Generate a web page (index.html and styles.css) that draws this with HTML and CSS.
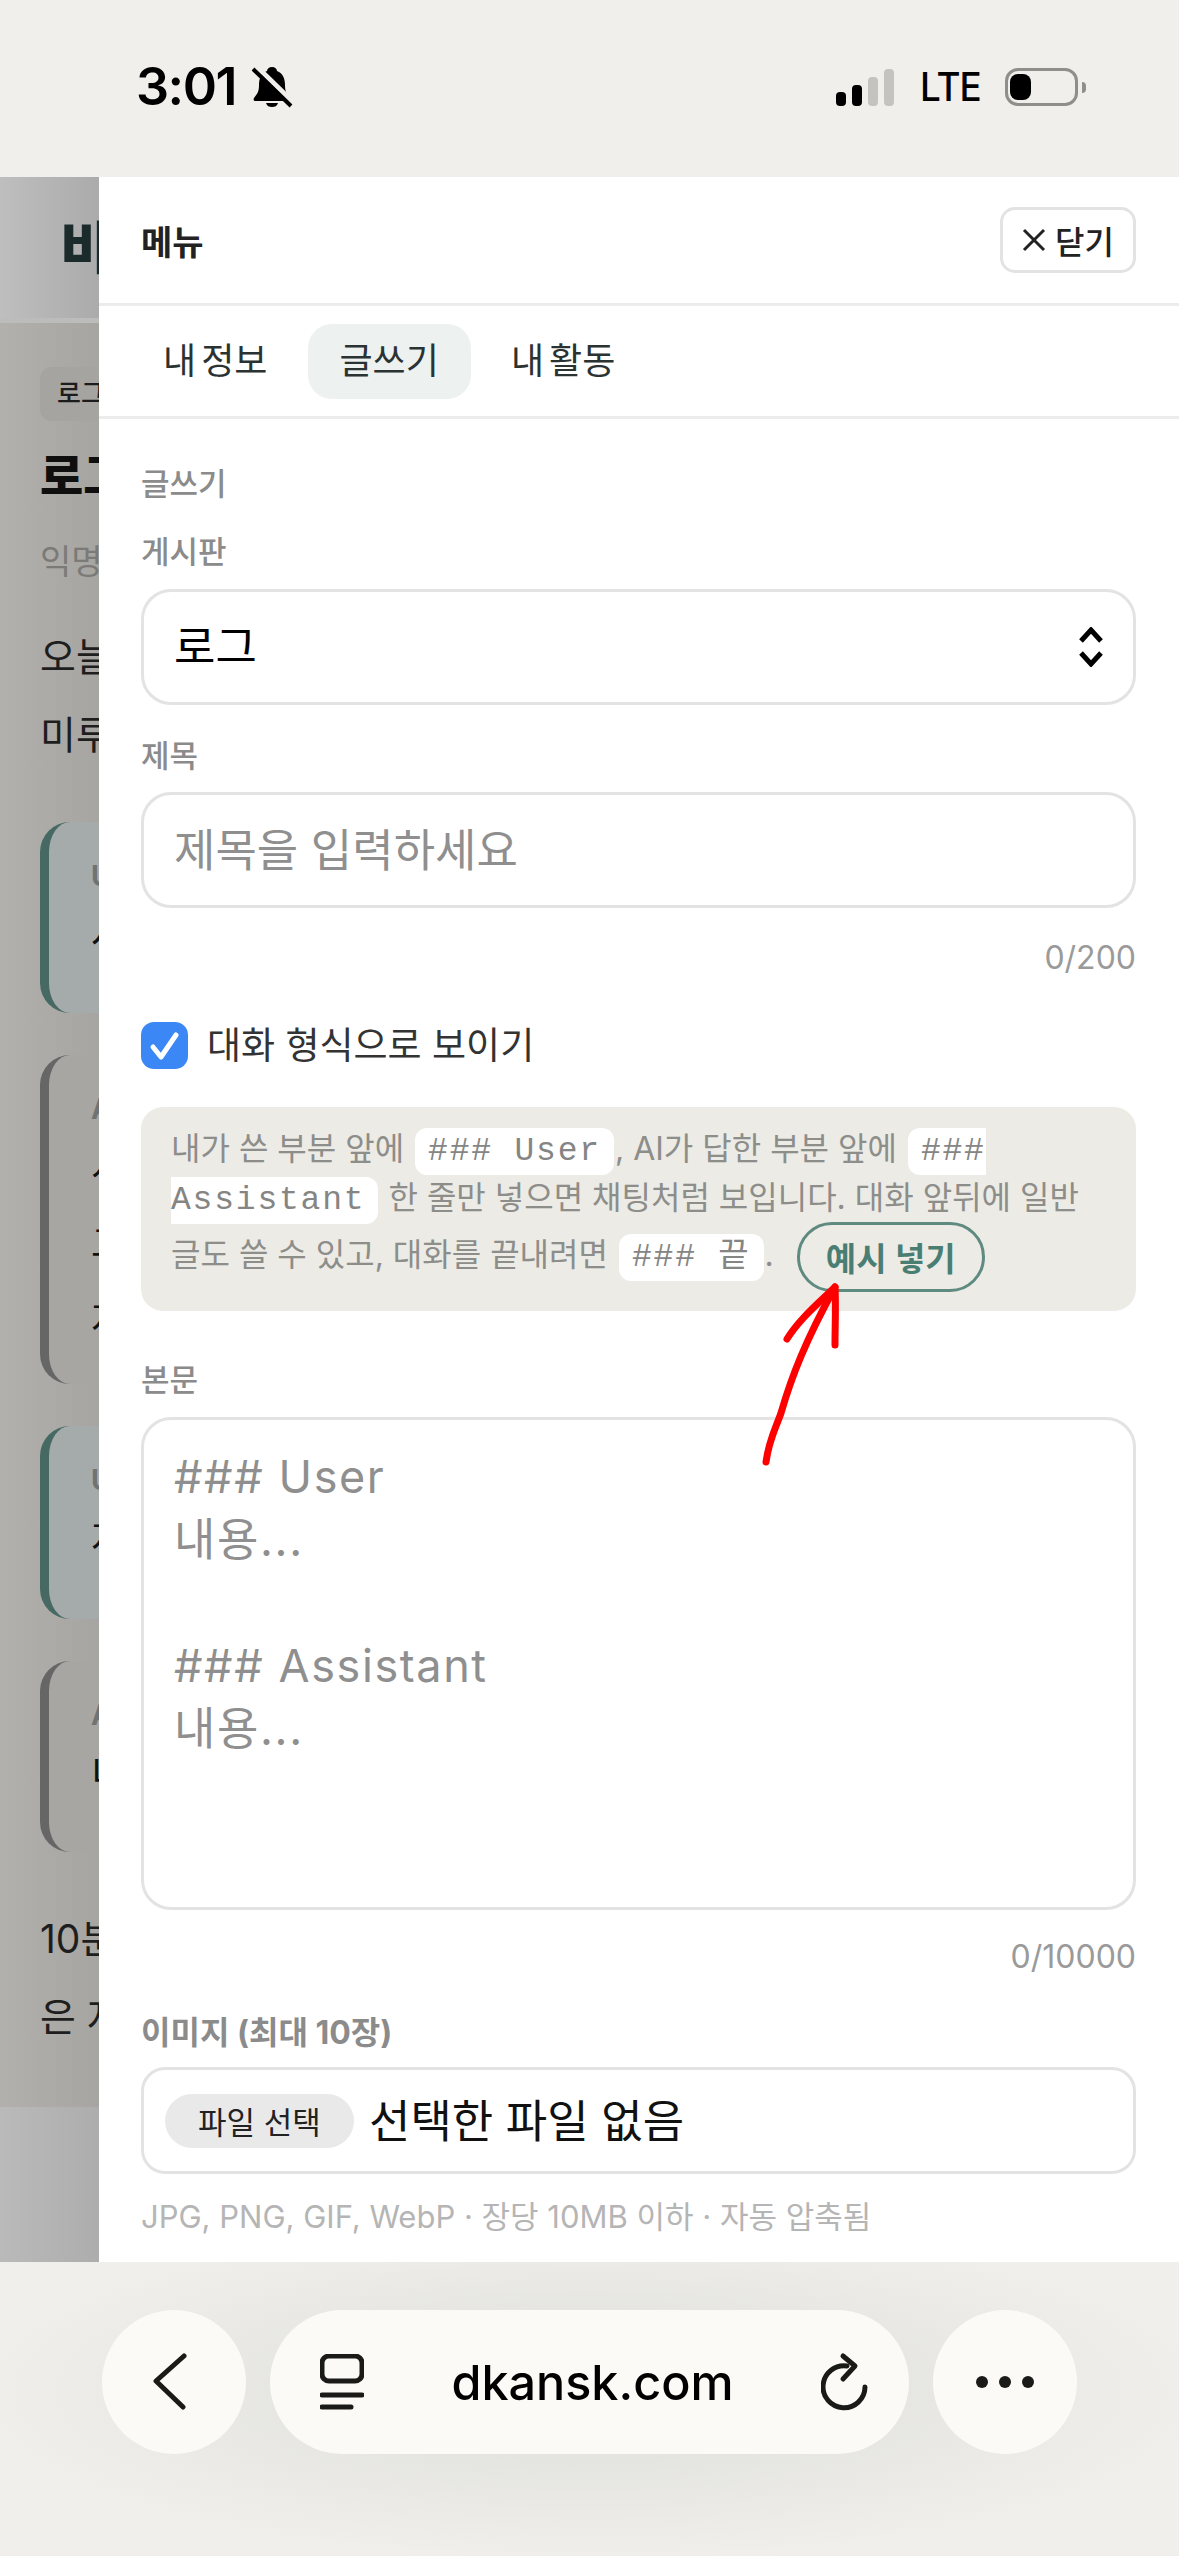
FILE: index.html
```html
<!DOCTYPE html>
<html lang="ko">
<head>
    <meta charset="UTF-8" name="viewport" content="width=device-width, initial-scale=1.0">
    <title>dkansk.com</title>
    <link rel="stylesheet" href="styles.css">
</head>
<body>
<div class="phone">

    <!-- Status bar -->
    <div class="status">
        <span class="time">3:01</span>
        <svg class="bell" width="42" height="44" viewBox="0 0 42 44">
            <path d="M21 2c-3 0-5 2-5 4C10 8 8 14 8 20c0 7-2 9-5 13-1 2 0 3 2 3h32c2 0 3-1 2-3-3-4-5-6-5-13 0-6-2-12-8-14 0-2-2-4-5-4z"/>
            <path d="M15 38h12c-1 3-3 4-6 4s-5-1-6-4z"/>
            <path class="bell-gap" d="M5 1l38 37"/>
            <path class="bell-slash" d="M2 4l38 37"/>
        </svg>
        <div class="status-right">
            <div class="signal">
                <i class="bar on b1"></i><i class="bar on b2"></i><i class="bar b3"></i><i class="bar b4"></i>
            </div>
            <span class="lte">LTE</span>
            <div class="battery"><i class="battery-fill"></i></div>
            <i class="battery-nub"></i>
        </div>
    </div>

    <div class="main">
        <!-- Page behind the menu, mostly covered -->
        <div class="under">
            <div class="under-head"><span class="logo">비밀</span></div>
            <div class="under-body">
                <span class="chip">로그</span>
                <div class="under-title">로그</div>
                <div class="under-meta">익명</div>
                <div class="under-text first">오늘</div>
                <div class="under-text">미루</div>
                <div class="card user h191"><b>User</b><p>사</p></div>
                <div class="card bot h329"><b>Assistant</b><p>시</p><p>그</p><p>저</p></div>
                <div class="card user h193"><b>User</b><p>저</p></div>
                <div class="card bot h191"><b>Assistant</b><p>니</p></div>
                <div class="under-text after">10분</div>
                <div class="under-text">은 저</div>
            </div>
            <div class="under-foot"></div>
        </div>

        <!-- Menu sheet -->
        <div class="sheet">
            <div class="sheet-head">
                <span class="sheet-title">메뉴</span>
                <button class="close-btn">
                    <svg width="24" height="24" viewBox="0 0 24 24"><path d="M2 2l20 20M22 2L2 22"/></svg>
                    닫기
                </button>
            </div>
            <div class="tabs">
                <span class="tab">내 정보</span>
                <span class="tab active">글쓰기</span>
                <span class="tab">내 활동</span>
            </div>

            <form class="form">
                <div class="label section">글쓰기</div>

                <div class="label board">게시판</div>
                <div class="select-wrap">
                    <select class="field"><option>로그</option></select>
                    <svg class="chevrons" width="26" height="40" viewBox="0 0 26 40">
                        <path d="M3 14L13 3l10 11M3 26l10 11 10-11"/>
                    </svg>
                </div>

                <div class="label title-label">제목</div>
                <input class="field" type="text" placeholder="제목을 입력하세요">
                <div class="count title-count">0/200</div>

                <label class="check-row">
                    <span class="checkbox">
                        <svg width="47" height="47" viewBox="0 0 47 47"><path d="M12 25l8 10 15-22"/></svg>
                    </span>
                    <span class="check-text">대화 형식으로 보이기</span>
                </label>

                <div class="note">내가 쓴 부분 앞에 <code>### User</code>, AI가 답한 부분 앞에 <code>### Assistant</code> 한 줄만 넣으면 채팅처럼 보입니다. 대화 앞뒤에 일반 글도 쓸 수 있고, 대화를 끝내려면 <code>### 끝</code>. <button class="sample-btn" type="button">예시 넣기</button></div>

                <div class="label body-label">본문</div>
                <textarea class="field body-field" placeholder="### User&#10;내용...&#10;&#10;### Assistant&#10;내용..."></textarea>
                <div class="count body-count">0/10000</div>

                <div class="label image-label">이미지 (최대 10장)</div>
                <div class="file-field">
                    <button class="file-btn" type="button">파일 선택</button>
                    <span class="file-name">선택한 파일 없음</span>
                </div>
                <div class="hint">JPG, PNG, GIF, WebP · 장당 10MB 이하 · 자동 압축됨</div>
            </form>
        </div>
    </div>

    <!-- Browser toolbar -->
    <div class="browser">
        <div class="round-btn back">
            <svg width="36" height="58" viewBox="0 0 36 58"><path d="M31 3L3 28l27 26"/></svg>
        </div>
        <div class="url-pill">
            <svg width="44" height="56" viewBox="0 0 44 56">
                <rect x="2" y="2" width="40" height="25" rx="7"/>
                <path d="M2 41h40M2 53h29"/>
            </svg>
            <span class="url">dkansk.com</span>
            <svg width="50" height="60" viewBox="0 0 50 60">
                <path d="M44 35A21 21 0 1 1 26 14"/>
                <path d="M22 4l12 10-12 13"/>
            </svg>
        </div>
        <div class="round-btn dots"><i></i><i></i><i></i></div>
    </div>

    <!-- Red hand-drawn arrow over the page -->
    <svg class="arrow" width="90" height="190" viewBox="0 0 90 190">
        <path d="M6 182C9 160 15 150 21 133C32 95 46 60 75 7"/>
        <path d="M27 59C40 38 60 22 75 7C76 28 75 45 75 65"/>
    </svg>
</div>
</body>
</html>
```
FILE: styles.css
```css
* {
    box-sizing: border-box;
    margin: 0;
    padding: 0;
}

body {
    margin: 0;
    background: #f0efeb;
}

.phone {
    position: relative;
    display: flex;
    flex-direction: column;
    width: 1179px;
    height: 2556px;
    overflow: hidden;
    background: #f0efeb;
    font-family: Inter, "Noto Sans CJK KR", sans-serif;
}

/* Status bar */
.status {
    display: flex;
    align-items: center;
    height: 177px;
    padding: 0 93px 3px 136px;
    background: #f0efeb;
}

.time {
    font-size: 52px;
    font-weight: 600;
    line-height: 1;
    letter-spacing: -1.5px;
    color: #000;
}

.bell {
    margin-left: 15px;
}

.bell-gap {
    fill: none;
    stroke: #f0efeb;
    stroke-width: 5;
}

.bell-slash {
    fill: none;
    stroke: #000;
    stroke-width: 4;
}

.status-right {
    display: flex;
    align-items: center;
    margin-left: auto;
}

.signal {
    display: flex;
    align-items: flex-end;
    gap: 6px;
    height: 37px;
}

.bar {
    width: 10px;
    border-radius: 4px;
    background: #c4c4bf;
}

.bar.on {
    background: #000;
}

.b1 { height: 14px; }
.b2 { height: 21px; }
.b3 { height: 29px; }
.b4 { height: 37px; }

.lte {
    margin-left: 26px;
    font-size: 40px;
    font-weight: 500;
    line-height: 1;
    letter-spacing: -1px;
    color: #000;
    transform: scaleX(0.92);
    transform-origin: left;
}

.battery {
    width: 73px;
    height: 38px;
    margin-left: 19px;
    padding: 3px 2px;
    border: 3px solid #8e8e8a;
    border-radius: 13px;
}

.battery-fill {
    display: block;
    width: 21px;
    height: 26px;
    border-radius: 8px;
    background: #000;
}

.battery-nub {
    width: 4px;
    height: 11px;
    margin-left: 4px;
    border-radius: 0 4px 4px 0;
    background: #8e8e8a;
}

/* Middle */
.main {
    display: flex;
    height: 2085px;
}

/* Covered page on the left */
.under {
    display: flex;
    flex-direction: column;
    flex: none;
    width: 99px;
    overflow: hidden;
    white-space: nowrap;
    background: linear-gradient(to right, #b1b0ac, #a6a5a1);
}

.under-head {
    height: 146px;
    padding: 31px 0 0 60px;
    border-bottom: 5px solid #bcbcba;
    background: linear-gradient(to right, #bebebe, #ababab);
}

.logo {
    font-size: 56px;
    font-weight: 800;
    line-height: 80px;
    color: #1b2a2a;
}

.under-body {
    padding: 44px 0 0 40px;
}

.chip {
    display: block;
    width: 120px;
    height: 54px;
    padding-left: 17px;
    border-radius: 12px;
    font-size: 26px;
    font-weight: 500;
    line-height: 54px;
    color: #1c1c1c;
    background: #a5a4a0;
}

.under-title {
    margin-top: 25px;
    font-size: 47px;
    font-weight: 800;
    line-height: 60px;
    color: #0f0f0f;
}

.under-meta {
    margin-top: 34px;
    font-size: 34px;
    line-height: 44px;
    color: #7b7a78;
}

.under-text {
    font-size: 39px;
    line-height: 78px;
    color: #1e1e1e;
}

.under-text.first {
    margin-top: 34px;
}

.under-text.after {
    margin-top: 48px;
}

.card {
    width: 320px;
    margin-top: 42px;
    padding: 34px 0 0 42px;
    border-left: 9px solid #666;
    border-radius: 30px;
    background: #a7a6a2;
}

.card.user {
    border-left-color: #466a63;
    background: #a5abab;
}

.under-text + .card {
    margin-top: 48px;
}

.card b {
    display: block;
    font-size: 28px;
    line-height: 40px;
    color: #6f7374;
}

.card p {
    font-size: 38px;
    line-height: 76px;
    color: #111;
}

.h191 { height: 191px; }
.h193 { height: 193px; }
.h329 { height: 329px; }

.under-foot {
    flex: 1;
    margin-top: 51px;
    background: linear-gradient(to right, #bababa, #adadad);
}

/* Menu sheet */
.sheet {
    flex: 1;
    background: #fff;
}

.sheet-head {
    display: flex;
    align-items: center;
    justify-content: space-between;
    height: 129px;
    padding: 0 43px 0 42px;
    border-bottom: 3px solid #ececec;
}

.sheet-title {
    font-size: 34px;
    font-weight: 700;
    color: #222;
}

.close-btn {
    display: flex;
    align-items: center;
    justify-content: center;
    gap: 9px;
    width: 136px;
    height: 66px;
    border: 3px solid #e3e3e3;
    border-radius: 15px;
    font-family: inherit;
    font-size: 32px;
    font-weight: 500;
    color: #222;
    background: #fff;
}

.close-btn svg path {
    fill: none;
    stroke: #222;
    stroke-width: 3;
}

.tabs {
    display: flex;
    gap: 8px;
    height: 113px;
    padding: 18px 0 0 32px;
    border-bottom: 3px solid #ececec;
}

.tab {
    height: 75px;
    padding: 0 32px;
    border-radius: 24px;
    font-size: 36px;
    line-height: 75px;
    word-spacing: -5px;
    color: #2b3332;
}

.tab.active {
    background: #edf1f0;
}

/* Form */
.form {
    display: flex;
    flex-direction: column;
    padding: 45px 43px 0 42px;
}

.label {
    font-size: 31px;
    font-weight: 500;
    line-height: 40px;
    color: #8b8b8b;
}

.board { margin: 28px 0 17px; }
.title-label { margin: 31px 0 16px; }
.body-label { margin: 49px 0 17px; }
.image-label { margin: 36px 0 14px; font-size: 32px; font-weight: 700; }

.field {
    display: block;
    width: 100%;
    height: 116px;
    padding: 0 30px;
    border: 3px solid #e3e3e3;
    border-radius: 30px;
    outline: none;
    font-family: inherit;
    font-size: 45px;
    color: #000;
    background: #fff;
    appearance: none;
}

.field::placeholder {
    color: #8f8f8f;
    opacity: 1;
}

.select-wrap {
    position: relative;
}

.chevrons {
    position: absolute;
    top: 38px;
    right: 32px;
}

.chevrons path {
    fill: none;
    stroke: #000;
    stroke-width: 5;
}

.count {
    font-size: 32px;
    line-height: 40px;
    text-align: right;
    color: #9a9a9a;
}

.title-count { margin-top: 30px; }
.body-count { margin-top: 27px; }

.check-row {
    display: flex;
    align-items: center;
    gap: 19px;
    height: 47px;
    margin-top: 44px;
    font-size: 37px;
    color: #333;
}

.check-text {
    margin-top: -5px;
}

.checkbox {
    width: 47px;
    height: 47px;
    border-radius: 13px;
    background: #3b87f5;
}

.checkbox svg {
    display: block;
}

.checkbox path {
    fill: none;
    stroke: #fff;
    stroke-width: 5;
    stroke-linecap: round;
    stroke-linejoin: round;
}

.note {
    height: 204px;
    margin-top: 38px;
    padding: 17px 28px 0 30px;
    border-radius: 22px;
    font-size: 32px;
    line-height: 49px;
    color: #8d8d8a;
    background: #ecebe6;
}

.note code {
    margin: 0 1px 0 2px;
    padding: 5px 13px;
    border-radius: 12px;
    font-family: "Liberation Mono", "Noto Sans CJK KR", monospace;
    font-size: 33px;
    line-height: 1;
    letter-spacing: 1.8px;
    color: #858583;
    background: #fff;
}

.sample-btn {
    width: 188px;
    height: 70px;
    margin-left: 14px;
    border: 3px solid #5f8a80;
    border-radius: 35px;
    vertical-align: middle;
    font-family: inherit;
    font-size: 33px;
    font-weight: 600;
    color: #4a7e73;
    background: transparent;
}

.body-field {
    height: 493px;
    padding-top: 25px;
    font-size: 45px;
    line-height: 63px;
    letter-spacing: 1.6px;
    resize: none;
}

.file-field {
    display: flex;
    align-items: center;
    gap: 15px;
    height: 107px;
    padding: 0 21px;
    border: 3px solid #e3e3e3;
    border-radius: 24px;
}

.file-btn {
    width: 189px;
    height: 54px;
    border: 0;
    border-radius: 27px;
    font-family: inherit;
    font-size: 31px;
    color: #222;
    background: #e9e9ea;
}

.file-name {
    margin-bottom: 5px;
    font-size: 45px;
    color: #111;
}

.hint {
    margin-top: 23px;
    font-size: 31px;
    line-height: 40px;
    color: #b5b5b5;
}

/* Browser toolbar */
.browser {
    display: flex;
    gap: 24px;
    height: 294px;
    padding: 48px 0 0 102px;
    background: radial-gradient(ellipse 620px 170px at 50% 130px, #e4e4e1 40%, #f0efeb 100%);
}

.round-btn {
    display: flex;
    align-items: center;
    justify-content: center;
    width: 144px;
    height: 144px;
    border-radius: 50%;
    background: #fbfaf6;
}

.back {
    padding-right: 7px;
}

.round-btn svg path,
.url-pill svg path,
.url-pill svg rect {
    fill: none;
    stroke: #1a1a18;
    stroke-width: 5;
    stroke-linecap: round;
    stroke-linejoin: round;
}

.url-pill {
    display: flex;
    align-items: center;
    justify-content: space-between;
    width: 639px;
    height: 144px;
    padding: 0 38px 0 50px;
    border-radius: 72px;
    background: #fbfaf6;
}

.url {
    font-size: 48.5px;
    font-weight: 500;
    color: #000;
}

.dots {
    gap: 11px;
}

.dots i {
    width: 12px;
    height: 12px;
    border-radius: 50%;
    background: #1a1a18;
}

/* Annotation */
.arrow {
    position: absolute;
    left: 760px;
    top: 1280px;
}

.arrow path {
    fill: none;
    stroke: #f00;
    stroke-width: 7;
    stroke-linecap: round;
    stroke-linejoin: round;
}
```
